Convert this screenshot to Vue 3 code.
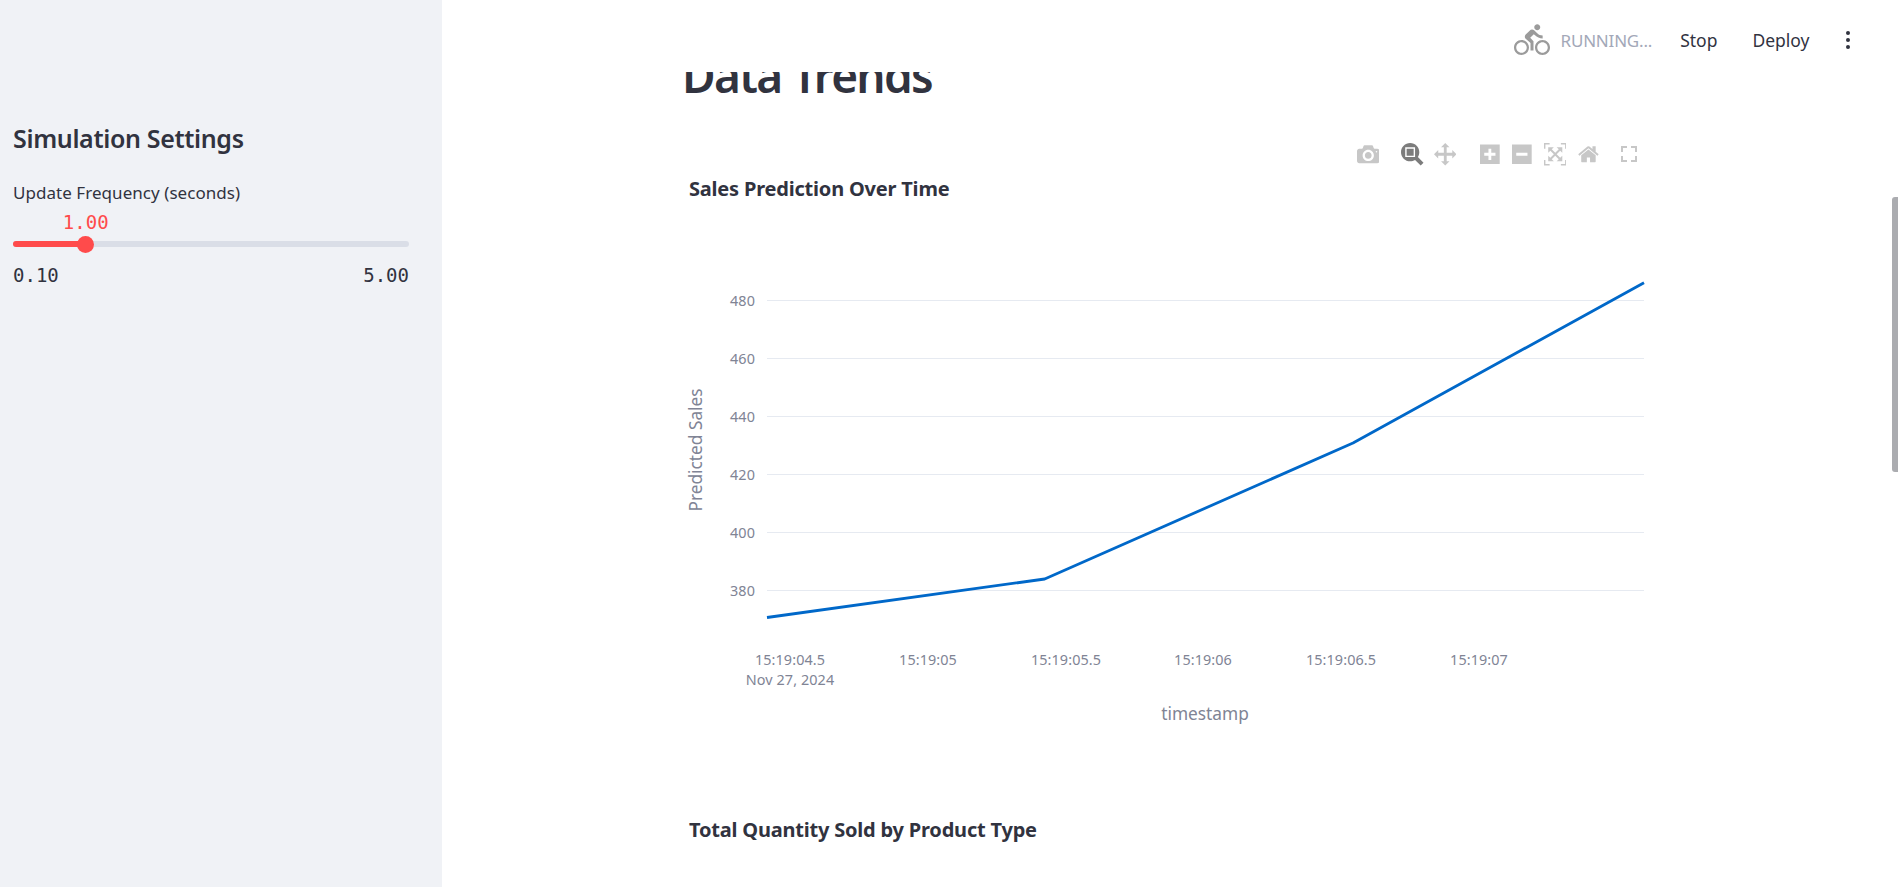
<script setup>
import { computed } from 'vue'

const sliderMin = 0.1
const sliderMax = 5
const sliderValue = 1

const sliderPercent = computed(() => ((sliderValue - sliderMin) / (sliderMax - sliderMin)) * 100)

// chart coordinates are relative to the plot svg (top left = 684, 130 on the page)
const plotLeft = 83
const plotRight = 960

const yTicks = [
  { label: '480', y: 170 },
  { label: '460', y: 228 },
  { label: '440', y: 286 },
  { label: '420', y: 344 },
  { label: '400', y: 402 },
  { label: '380', y: 460 },
]

const xTicks = [
  { label: '15:19:04.5', x: 106 },
  { label: '15:19:05', x: 244 },
  { label: '15:19:05.5', x: 382 },
  { label: '15:19:06', x: 519 },
  { label: '15:19:06.5', x: 657 },
  { label: '15:19:07', x: 795 },
]

const linePoints = '83,487.5 360.7,449 669,313 960,152.7'

const modeButtons = [
  {
    name: 'camera',
    width: 1000,
    d: 'm500 450c-83 0-150-67-150-150 0-83 67-150 150-150 83 0 150 67 150 150 0 83-67 150-150 150z m400 150h-120c-16 0-34 13-39 29l-31 93c-6 15-23 28-40 28h-340c-16 0-34-13-39-28l-31-94c-6-15-23-28-40-28h-120c-55 0-100-45-100-100v-450c0-55 45-100 100-100h800c55 0 100 45 100 100v450c0 55-45 100-100 100z m-400-550c-138 0-250 112-250 250 0 138 112 250 250 250 138 0 250-112 250-250 0-138-112-250-250-250z m365 380c-19 0-35 16-35 35 0 19 16 35 35 35 19 0 35-16 35-35 0-19-16-35-35-35z',
    gap: 'wide',
  },
  {
    name: 'zoom',
    width: 1000,
    active: true,
    d: 'm1000-25l-250 251c40 63 63 138 63 218 0 224-182 406-407 406-224 0-406-182-406-406s183-406 407-406c80 0 155 22 218 62l250-250 125 125z m-812 250l0 438 437 0 0-438-437 0z m62 375l313 0 0-312-313 0 0 312z',
    gap: 'tight',
  },
  {
    name: 'pan',
    width: 1000,
    d: 'm1000 350l-187 188 0-125-250 0 0 250 125 0-188 187-187-187 125 0 0-250-250 0 0 125-188-188 186-187 0 125 252 0 0-250-125 0 187-188 188 188-125 0 0 250 250 0 0-126 187 188z',
    gap: 'wider',
  },
  {
    name: 'zoom-in',
    width: 875,
    d: 'm1 787l0-875 875 0 0 875-875 0z m687-500l-187 0 0-187-125 0 0 187-188 0 0 125 188 0 0 187 125 0 0-187 187 0 0-125z',
  },
  {
    name: 'zoom-out',
    width: 875,
    d: 'm0 788l0-876 875 0 0 876-875 0z m688-500l-500 0 0 125 500 0 0-125z',
  },
  {
    name: 'autoscale',
    width: 1000,
    d: 'm250 850l-187 0-63 0 0-62 0-188 63 0 0 188 187 0 0 62z m688 0l-188 0 0-62 188 0 0-188 62 0 0 188 0 62-62 0z m-875-938l0 188-63 0 0-188 0-62 63 0 187 0 0 62-187 0z m875 188l0-188-188 0 0-62 188 0 62 0 0 62 0 188-62 0z m-125 188l-1 0-93-94-156 156 156 156 92-93 2 0 0 250-250 0 0-2 93-92-156-156-156 156 94 92 0 2-250 0 0-250 0 0 93 93 157-156-157-156-93 94 0 0 0-250 250 0 0 0-94 93 156 157 156-157-93-93 0 0 250 0 0 250z',
  },
  {
    name: 'home',
    width: 928.6,
    d: 'm786 296v-267q0-15-11-26t-25-10h-214v214h-143v-214h-214q-15 0-25 10t-11 26v267q0 1 0 2t0 2l321 264 321-264q1-1 1-4z m124 39l-34-41q-5-5-12-6h-2q-7 0-12 3l-386 322-386-322q-7-4-13-4-7 2-12 7l-35 41q-4 5-3 13t6 12l401 334q18 15 42 15t43-15l136-114v109q0 8 5 13t13 5h107q8 0 13-5t5-13v-227l122-102q5-5 6-12t-4-13z',
    gap: 'wide',
  },
]
</script>

<template>
  <div class="app">
    <aside class="sidebar">
      <h2 class="sidebar-title">Simulation Settings</h2>
      <label class="slider-label">Update Frequency (seconds)</label>
      <div class="slider">
        <div class="slider-track">
          <div class="slider-fill" :style="{ width: sliderPercent + '%' }"></div>
          <div class="slider-thumb" :style="{ left: sliderPercent + '%' }">
            <span class="slider-value">{{ sliderValue.toFixed(2) }}</span>
          </div>
        </div>
        <div class="slider-range">
          <span>{{ sliderMin.toFixed(2) }}</span>
          <span>{{ sliderMax.toFixed(2) }}</span>
        </div>
      </div>
    </aside>

    <main class="main">
      <header class="topbar">
        <svg class="bike" viewBox="0 0 24 24" fill="currentColor">
          <path d="M15.5 5.5c1.1 0 2-.9 2-2s-.9-2-2-2-2 .9-2 2 .9 2 2 2zM5 12c-2.8 0-5 2.2-5 5s2.2 5 5 5 5-2.2 5-5-2.2-5-5-5zm0 8.5c-1.9 0-3.5-1.6-3.5-3.5s1.6-3.5 3.5-3.5 3.5 1.6 3.5 3.5-1.6 3.5-3.5 3.5zm5.8-10l2.4-2.4.8.8c1.3 1.3 3 2.1 5.1 2.1V9c-1.5 0-2.7-.6-3.6-1.5l-1.9-1.9c-.5-.4-1-.6-1.6-.6s-1.1.2-1.4.6L7.8 8.4c-.4.4-.6.9-.6 1.4 0 .6.2 1.1.6 1.4L11 14v5h2v-6.2l-2.2-2.3zM19 12c-2.8 0-5 2.2-5 5s2.2 5 5 5 5-2.2 5-5-2.2-5-5-5zm0 8.5c-1.9 0-3.5-1.6-3.5-3.5s1.6-3.5 3.5-3.5 3.5 1.6 3.5 3.5-1.6 3.5-3.5 3.5z" />
        </svg>
        <span class="running">RUNNING...</span>
        <span class="topbar-btn stop">Stop</span>
        <span class="topbar-btn deploy">Deploy</span>
        <span class="kebab"><i></i><i></i><i></i></span>
      </header>

      <div class="content">
        <h1 class="page-title">Data Trends</h1>

        <div class="chart">
          <div class="modebar">
            <svg
              v-for="btn in modeButtons"
              :key="btn.name"
              :class="['mode-icon', { 'mode-icon-active': btn.active }, btn.gap && `mode-gap-${btn.gap}`]"
              :viewBox="`0 0 ${btn.width} 1000`"
              :style="{ width: btn.width * 0.0225 + 'px' }"
            >
              <path :d="btn.d" transform="matrix(1 0 0 -1 0 850)" />
            </svg>
            <svg class="mode-icon mode-fullscreen" viewBox="0 0 16 16" fill="none" stroke="currentColor" stroke-width="2">
              <path d="M1 6V1h5M10 1h5v5M15 10v5h-5M6 15H1v-5" />
            </svg>
          </div>

          <svg class="plot" width="972" height="620">
            <text class="chart-title" x="5" y="66">Sales Prediction Over Time</text>
            <line
              v-for="tick in yTicks"
              :key="tick.label"
              class="grid-line"
              :x1="plotLeft"
              :x2="plotRight"
              :y1="tick.y + 0.5"
              :y2="tick.y + 0.5"
            />
            <text
              v-for="tick in yTicks"
              :key="'y' + tick.label"
              class="tick"
              text-anchor="end"
              x="71"
              :y="tick.y + 5.5"
            >{{ tick.label }}</text>
            <text
              v-for="tick in xTicks"
              :key="tick.label"
              class="tick"
              text-anchor="middle"
              :x="tick.x"
              y="535"
            >{{ tick.label }}</text>
            <text class="tick" text-anchor="middle" x="106" y="555">Nov 27, 2024</text>
            <text class="axis-title" text-anchor="middle" x="521" y="590">timestamp</text>
            <text class="axis-title" text-anchor="middle" transform="translate(18,320) rotate(-90)">Predicted Sales</text>
            <polyline class="series" :points="linePoints" />
          </svg>
        </div>

        <div class="chart chart-next">
          <svg class="plot" width="972" height="113">
            <text class="chart-title" x="5" y="63">Total Quantity Sold by Product Type</text>
          </svg>
        </div>
      </div>

      <div class="scroll-thumb"></div>
    </main>
  </div>
</template>

<style scoped>
.app {
  display: flex;
  width: 1898px;
  height: 887px;
  overflow: hidden;
  background: #ffffff;
  color: #31333f;
  font-family: 'Noto Sans', sans-serif;
}

.sidebar {
  flex: 0 0 442px;
  box-sizing: border-box;
  padding: 121px 33px 0 13px;
  background: #f0f2f6;
}

.sidebar-title {
  margin: 0 0 27px;
  font-size: 25px;
  font-weight: 600;
  line-height: 34px;
  letter-spacing: -0.35px;
}

.slider-label {
  display: block;
  font-size: 17px;
  line-height: 22px;
  letter-spacing: 0.05px;
}

.slider {
  margin-top: 37px;
}

.slider-track {
  position: relative;
  height: 6px;
  border-radius: 3px;
  background: #dadee7;
}

.slider-fill {
  height: 100%;
  border-radius: 3px;
  background: #ff4b4b;
}

.slider-thumb {
  position: absolute;
  top: -5.5px;
  width: 17px;
  height: 17px;
  margin-left: -8.5px;
  border-radius: 50%;
  background: #ff4b4b;
}

.slider-value {
  position: absolute;
  left: 50%;
  top: -26px;
  transform: translateX(-50%);
  color: #ff4b4b;
  font-family: 'DejaVu Sans Mono', monospace;
  font-size: 19px;
  line-height: 24px;
}

.slider-range {
  display: flex;
  justify-content: space-between;
  margin-top: 16px;
  font-family: 'DejaVu Sans Mono', monospace;
  font-size: 19px;
  line-height: 24px;
}

.main {
  position: relative;
  flex: 1;
  min-width: 0;
  overflow: hidden;
}

.topbar {
  position: absolute;
  top: 0;
  left: 0;
  right: 0;
  z-index: 2;
  display: flex;
  align-items: center;
  justify-content: flex-end;
  box-sizing: border-box;
  height: 72px;
  padding: 8px 48px 0 0;
  background: #ffffff;
}

.bike {
  width: 36px;
  height: 36px;
  margin-right: 11px;
  color: #9b9b9b;
}

.running {
  color: #a3a8b8;
  font-size: 17px;
  letter-spacing: -0.2px;
}

.topbar-btn {
  font-size: 17.5px;
}

.stop {
  margin-left: 28px;
}

.deploy {
  margin-left: 35px;
}

.kebab {
  display: flex;
  flex-direction: column;
  gap: 2.5px;
  margin-left: 36px;
}

.kebab i {
  display: block;
  width: 4.5px;
  height: 4.5px;
  border-radius: 50%;
  background: #31333f;
}

.content {
  width: 972px;
  margin: 0 auto;
}

.page-title {
  margin: 0 0 0 -2px;
  padding-top: 32px;
  font-size: 46px;
  font-weight: 600;
  line-height: 86px;
  letter-spacing: -1.7px;
}

.chart {
  position: relative;
  margin-top: 12px;
}

.chart-next {
  margin-top: 24px;
}

.plot {
  display: block;
}

.modebar {
  position: absolute;
  top: 13px;
  right: 19px;
  display: flex;
  align-items: center;
  gap: 12px;
}

.mode-icon {
  display: block;
  height: 22.5px;
  color: #c7c7c7;
  fill: currentColor;
}

.mode-icon-active {
  color: #7c7c7c;
}

.mode-gap-wide {
  margin-right: 10px;
}

.mode-gap-tight {
  margin-right: -2px;
}

.mode-gap-wider {
  margin-right: 12px;
}

.mode-fullscreen {
  width: 16px;
  height: 16px;
  fill: none;
}

.chart-title {
  fill: #31333f;
  font-size: 20px;
  font-weight: 700;
  letter-spacing: -0.2px;
}

.grid-line {
  stroke: #e6eaf1;
  stroke-width: 1.2;
}

.tick {
  fill: #808495;
  font-size: 14.4px;
  letter-spacing: 0.1px;
}

.axis-title {
  fill: #808495;
  font-size: 17.3px;
}

.series {
  fill: none;
  stroke: #0068c9;
  stroke-width: 2.8;
  stroke-linejoin: round;
}

.scroll-thumb {
  position: absolute;
  top: 197px;
  right: 0;
  width: 6px;
  height: 275px;
  border-radius: 3px 0 0 3px;
  background: #abacb0;
}
</style>
